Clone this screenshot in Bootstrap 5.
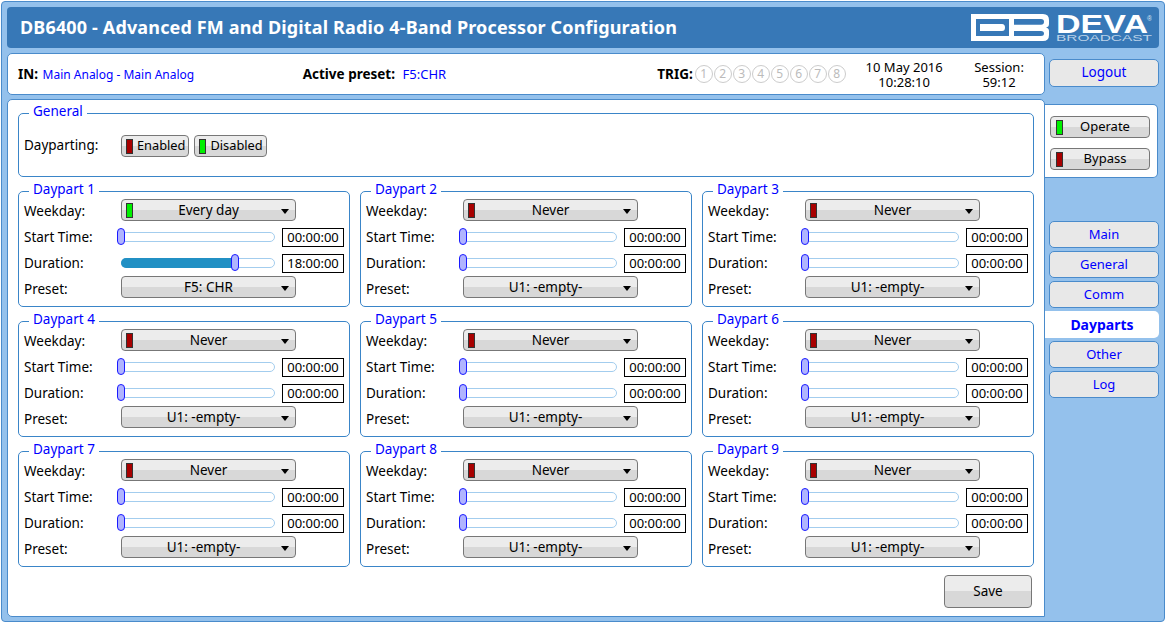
<!DOCTYPE html>
<html lang="en">
<head>
  <meta charset="UTF-8" />
  <title>DB6400 - Dayparts</title>
  <link href="https://cdn.jsdelivr.net/npm/bootstrap@5.3.3/dist/css/bootstrap.min.css" rel="stylesheet" />
  <style>
    html, body { height: 100%; }
    body { background: #fff; font-family: "Noto Sans", Tahoma, sans-serif; font-size: 13.5px; line-height: 15px; color: #000; }
    .shell { width: 1164px; height: 621px; margin: 1px 0 0 1px; padding: 5px; background: #94c1ec; border: 1px solid #4a8bcb; border-radius: 4px; }
    .top-head { height: 41px; padding: 0 7px 0 13px; background: #3778b7; border-radius: 4px; color: #fff; }
    .top-head h1 { margin: 0; font-family: "Noto Sans", sans-serif; font-size: 18px; font-weight: 700; letter-spacing: .15px; }
    .main-col { width: 1038px; }
    .side-col { width: 113px; }
    .status-bar { height: 42px; margin-top: 5px; padding: 0 10px; background: #fff; border: 1px solid #4a8bcb; border-radius: 5px; }
    .status-in { width: 285px; }
    .status-in .blue-txt { margin-left: 1px; font-size: 12px; }
    .status-preset { width: 355px; }
    .status-preset .blue-txt { margin-left: 4px; font-size: 13px; }
    .status-trig { width: 187px; }
    .status-date { width: 120px; padding-top: 1px; font-size: 13px; }
    .status-session { width: 70px; padding-top: 1px; font-size: 13px; }
    .blue-txt { color: #00f; }
    .trig-num { flex: none; width: 18px; height: 18px; margin-right: 1px; border: 1px solid #ccc; border-radius: 9px; color: #bbb; font-size: 12px; line-height: 16px; text-align: center; }
    .trig-label { margin-right: 2px; }
    .page-panel { height: 518px; margin-top: 4px; padding: 13px 10px 0; background: #fff; border: 1px solid #4a8bcb; border-radius: 5px 5px 0 5px; }
    .box-set { position: relative; border: 1px solid #3a85c8; border-radius: 5px; padding: 6px 5px 0; }
    .box-title { position: absolute; top: -11px; left: 10px; padding: 0 4px; background: #fff; font-size: 13.5px; line-height: 17px; color: #00f; }
    .general-set { height: 64px; margin-bottom: 14px; }
    .daypart-grid { display: grid; grid-template-columns: repeat(3, 332px); gap: 14px 10px; }
    .daypart-set { height: 116px; }
    .dp-line { height: 26px; }
    .dp-label { flex: none; width: 97px; }
    .lamp { display: inline-block; flex: none; width: 7px; height: 15px; border: 1px solid #333; }
    .lamp-on { background: #00f000; }
    .lamp-off { background: #a80000; }
    .gray-btn { background: linear-gradient(#ececec 0 50%, #d8d8d8 50% 100%); border: 1px solid #777; border-radius: 4px; color: #000; padding: 0; font-size: 13.5px; line-height: 15px; }
    .toggle-btn { height: 22px; padding: 0 3px 2px 4px; gap: 4px; font-size: 12.8px; }
    .toggle-btn .lamp { margin-top: 2px; }
    .toggle-btn + .toggle-btn { margin-left: 5px; }
    .general-row { padding-top: 15px; }
    .general-row .dp-label { padding-top: 3px; }
    .drop-btn { position: relative; width: 175px; height: 22px; margin-bottom: 2px; padding: 0 4px; }
    .drop-btn.drop-low { margin-bottom: 4px; }
    .drop-btn .lamp { position: absolute; left: 4px; top: 3px; }
    .drop-caret { position: absolute; right: 6px; top: 9px; width: 0; height: 0; border: 4px solid transparent; border-top: 5px solid #000; border-bottom: 0; }
    .drop-text { display: block; width: 100%; text-align: center; }
    .drop-text.drop-empty { padding-right: 10px; }
    .slide-track { position: relative; flex: none; width: 154px; height: 10px; border: 1px solid #a3cdee; border-radius: 5px; }
    .slide-fill { height: 10px; margin: -1px 0 0 -1px; background: #2190c4; border-radius: 5px 0 0 5px; }
    .slide-thumb { position: absolute; top: -5px; width: 8px; height: 17px; margin-left: -5px; background: #b0b4ff; border: 1px solid #1a1aff; border-radius: 4px; }
    .time-box { flex: none; width: 62px; height: 19px; margin-left: 7px; border: 1px solid #000; font-size: 13px; line-height: 17px; text-align: center; }
    .save-btn { width: 88px; height: 33px; margin: 8px 2px 0 0; }
    .logout-btn { display: block; width: 110px; height: 28px; margin: 11px 0 0 4px; padding: 0 0 2px; background: #e8e8e8; border: 1px solid #4a8bcb; border-radius: 5px; color: #00f; font-size: 13.5px; }
    .side-panel { height: 74px; margin-top: 17px; padding: 11px 8px 0 5px; background: #fff; border: 1px solid #4a8bcb; border-left: 0; border-radius: 0 5px 5px 0; }
    .side-panel .gray-btn { position: relative; width: 100px; height: 22px; margin-bottom: 10px; padding: 0 0 2px 10px; font-size: 13px; }
    .side-panel .lamp { position: absolute; left: 5px; top: 3px; }
    .tab-list { margin-top: 43px; }
    .tab-btn { display: block; width: 110px; height: 27px; margin: 0 0 3px 4px; background: #e8e8e8; border: 1px solid #4a8bcb; border-radius: 5px; color: #00f; font-size: 13px; line-height: 25px; text-align: center; }
    .tab-btn.tab-active { width: 114px; margin-left: 0; border: 0; border-radius: 0 5px 5px 0; background: #fff; font-size: 14px; font-weight: 700; line-height: 27px; }
  </style>
</head>
<body>
  <div class="shell">
    <div class="top-head d-flex align-items-center justify-content-between">
      <h1>DB6400 - Advanced FM and Digital Radio 4-Band Processor Configuration</h1>
      <!-- viewBox is in page pixels, easier to line up with the screenshot -->
      <svg width="183" height="41" viewBox="969 7 183 41">
        <path fill="#fff" fill-rule="evenodd" d="M971 14H1043Q1049 14 1049 20V24Q1049 27 1046 27.5Q1049 28 1049 31V35Q1049 41 1043 41H971ZM976 19V36H1009V19ZM980 24H1002Q1005 24 1005 27.5Q1005 31 1002 31H980ZM1014 19V24.7H1041Q1044 24.7 1044 21.8Q1044 19 1041 19ZM1014 31V36H1041Q1044 36 1044 33.5Q1044 31 1041 31Z"/>
        <text x="1056" y="33" fill="#fff" font-family="Liberation Sans" font-weight="700" font-size="25" textLength="92" lengthAdjust="spacingAndGlyphs">DEVA</text>
        <text x="1056" y="41" fill="#bcd2e8" font-family="Liberation Sans" font-size="8.5" textLength="96" lengthAdjust="spacingAndGlyphs">BROADCAST</text>
        <text x="1147" y="21" fill="#dfeaf5" font-family="Liberation Sans" font-size="7">®</text>
      </svg>
    </div>
    <div class="d-flex">
      <div class="main-col">
        <div class="status-bar d-flex align-items-center">
          <div class="status-in"><b>IN:</b> <span class="blue-txt">Main Analog - Main Analog</span></div>
          <div class="status-preset"><b>Active preset:</b> <span class="blue-txt">F5:CHR</span></div>
          <div class="status-trig d-flex align-items-center">
            <b class="trig-label">TRIG:</b>
            <span class="trig-num">1</span><span class="trig-num">2</span><span class="trig-num">3</span><span class="trig-num">4</span><span class="trig-num">5</span><span class="trig-num">6</span><span class="trig-num">7</span><span class="trig-num">8</span>
          </div>
          <div class="status-date text-center">10 May 2016<br />10:28:10</div>
          <div class="status-session text-center">Session:<br />59:12</div>
        </div>
        <div class="page-panel">
          <div class="box-set general-set">
            <span class="box-title">General</span>
            <div class="general-row d-flex align-items-start">
              <span class="dp-label">Dayparting:</span>
              <button class="gray-btn toggle-btn d-flex align-items-center"><span class="lamp lamp-off"></span>Enabled</button>
              <button class="gray-btn toggle-btn d-flex align-items-center"><span class="lamp lamp-on"></span>Disabled</button>
            </div>
          </div>
          <div id="daypart-grid" class="daypart-grid"></div>
          <div class="d-flex justify-content-end">
            <button class="gray-btn save-btn">Save</button>
          </div>
        </div>
      </div>
      <div class="side-col">
        <button class="logout-btn">Logout</button>
        <div class="side-panel">
          <button class="gray-btn d-block"><span class="lamp lamp-on"></span>Operate</button>
          <button class="gray-btn d-block"><span class="lamp lamp-off"></span>Bypass</button>
        </div>
        <div class="tab-list">
          <a class="tab-btn text-decoration-none">Main</a>
          <a class="tab-btn text-decoration-none">General</a>
          <a class="tab-btn text-decoration-none">Comm</a>
          <a class="tab-btn tab-active text-decoration-none">Dayparts</a>
          <a class="tab-btn text-decoration-none">Other</a>
          <a class="tab-btn text-decoration-none">Log</a>
        </div>
      </div>
    </div>
  </div>

  <script>
    const dayparts = [
      { day: 'Every day', on: true, start: '00:00:00', dur: '18:00:00', preset: 'F5: CHR' }
    ];
    for (let i = 0; i < 8; i++) {
      dayparts.push({ day: 'Never', on: false, start: '00:00:00', dur: '00:00:00', preset: 'U1: -empty-' });
    }

    function pct(t) {
      const h = t.split(':').map(Number);
      return (h[0] * 3600 + h[1] * 60 + h[2]) / 86400;
    }

    function slider(t) {
      const x = Math.round(pct(t) * 152);
      const fill = x > 0 ? `<div class="slide-fill" style="width: ${x}px"></div>` : '';
      return `<div class="slide-track">${fill}<div class="slide-thumb" style="left: ${x}px"></div></div>`;
    }

    const grid = document.getElementById('daypart-grid');
    dayparts.forEach((d, i) => {
      const box = document.createElement('div');
      box.className = 'box-set daypart-set';
      const emptyClass = d.preset.includes('empty') ? 'drop-empty' : '';
      box.innerHTML = `
        <span class="box-title">Daypart ${i + 1}</span>
        <div class="dp-line d-flex align-items-center">
          <span class="dp-label">Weekday:</span>
          <button class="gray-btn drop-btn"><span class="lamp ${d.on ? 'lamp-on' : 'lamp-off'}"></span><span class="drop-text">${d.day}</span><span class="drop-caret"></span></button>
        </div>
        <div class="dp-line d-flex align-items-center">
          <span class="dp-label">Start Time:</span>${slider(d.start)}<span class="time-box">${d.start}</span>
        </div>
        <div class="dp-line d-flex align-items-center">
          <span class="dp-label">Duration:</span>${slider(d.dur)}<span class="time-box">${d.dur}</span>
        </div>
        <div class="dp-line d-flex align-items-center">
          <span class="dp-label">Preset:</span>
          <button class="gray-btn drop-btn drop-low"><span class="drop-text ${emptyClass}">${d.preset}</span><span class="drop-caret"></span></button>
        </div>`;
      grid.appendChild(box);
    });
  </script>
  <script src="https://cdn.jsdelivr.net/npm/bootstrap@5.3.3/dist/js/bootstrap.bundle.min.js"></script>
</body>
</html>
